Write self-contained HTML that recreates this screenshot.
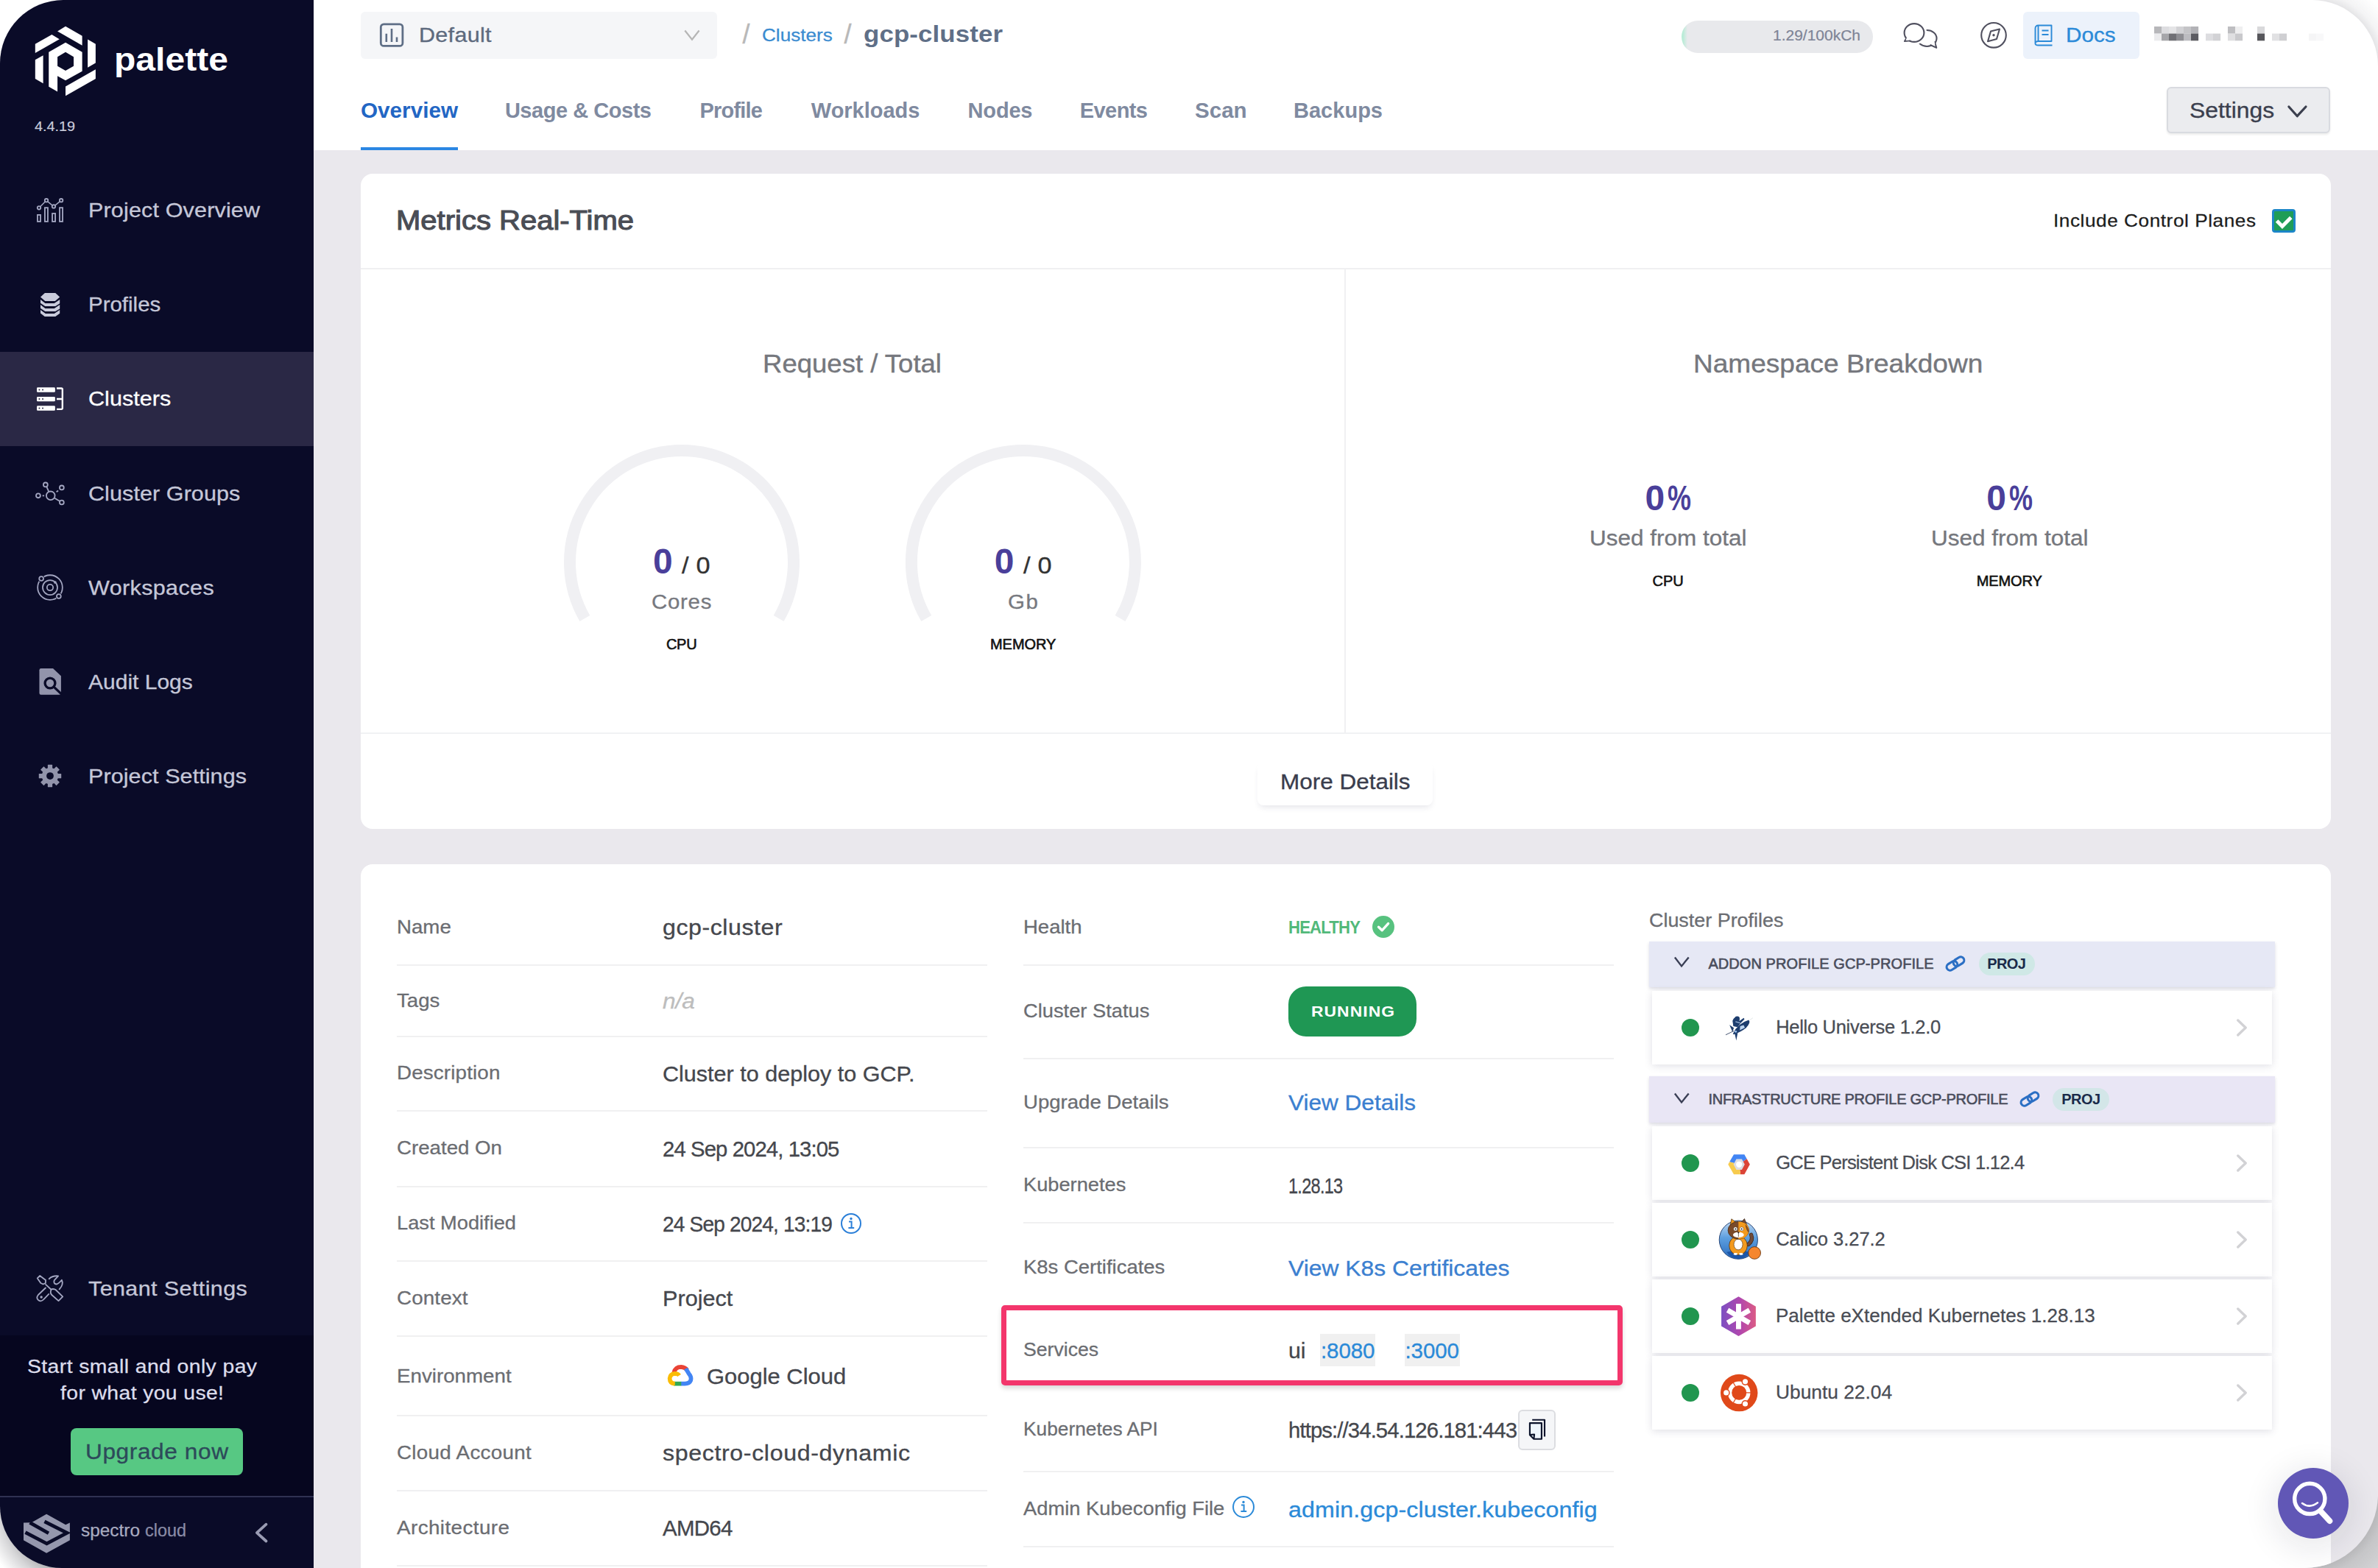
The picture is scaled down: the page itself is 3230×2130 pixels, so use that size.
<!DOCTYPE html><html lang="en"><head><meta charset="utf-8"><title>gcp-cluster - Palette</title><style>

html,body{margin:0;padding:0;}
body{width:3230px;height:2130px;overflow:hidden;background:#fff;font-family:"Liberation Sans", sans-serif;position:relative;}
#app{position:absolute;left:0;top:0;width:3230px;height:2130px;overflow:hidden;background:#eae8ed;border-radius:86px 90px 100px 84px;}
.b{position:absolute;box-sizing:border-box;display:block;}
.t{position:absolute;white-space:pre;line-height:1;font-family:"Liberation Sans", sans-serif;margin:0;padding:0;}

</style></head><body><div class="b" style="left:3110px;top:0;width:120px;height:120px;background:radial-gradient(circle at 30px 90px,#e2e2e4 88px,#f4f4f5 100px,#fff 122px);"></div><div class="b" style="left:3100px;top:2000px;width:130px;height:130px;background:radial-gradient(circle at 30px 30px,#b4b4b6 96px,#c6c6c8 112px,#d8d8da 150px);"></div><div class="b" style="left:0;top:2010px;width:130px;height:120px;background:radial-gradient(circle at 100px 40px,#aeaeb0 82px,#d6d6d8 100px,#fff 124px);"></div><div id="app">
<div class="b" style="left:0px;top:0px;width:426px;height:2130px;background:#0a0b28;"></div>
<div class="b" style="left:0px;top:478px;width:426px;height:128px;background:#2a2845;"></div>
<div class="b" style="left:0px;top:1814px;width:426px;height:218px;background:#06061f;"></div>
<div class="b" style="left:0px;top:2031.5px;width:426px;height:2.2px;background:#2f3152;"></div>
<span class="t" style="top:58.51px;font-size:44px;color:#fff;font-weight:700;letter-spacing:0.062px;transform:scaleX(1.0900);transform-origin:left center;left:155.00px;">palette</span>
<span class="t" style="top:161.72px;font-size:19px;color:#c9cbdb;-webkit-text-stroke:0.21px;transform:scaleX(1.0411);transform-origin:left center;left:47.00px;">4.4.19</span>
<span class="t" style="top:271.92px;font-size:28px;color:#c5c7d8;-webkit-text-stroke:0.31px;letter-spacing:0.142px;transform:scaleX(1.0900);transform-origin:left center;left:120.00px;">Project Overview</span>
<span class="t" style="top:400.32px;font-size:28px;color:#c5c7d8;-webkit-text-stroke:0.31px;transform:scaleX(1.0527);transform-origin:left center;left:120.00px;">Profiles</span>
<span class="t" style="top:528.32px;font-size:28px;color:#fff;-webkit-text-stroke:0.31px;letter-spacing:0.033px;transform:scaleX(1.0900);transform-origin:left center;left:120.00px;">Clusters</span>
<span class="t" style="top:657.32px;font-size:28px;color:#c5c7d8;-webkit-text-stroke:0.31px;letter-spacing:0.075px;transform:scaleX(1.0900);transform-origin:left center;left:120.00px;">Cluster Groups</span>
<span class="t" style="top:785.32px;font-size:28px;color:#c5c7d8;-webkit-text-stroke:0.31px;letter-spacing:0.340px;transform:scaleX(1.0900);transform-origin:left center;left:120.00px;">Workspaces</span>
<span class="t" style="top:912.82px;font-size:28px;color:#c5c7d8;-webkit-text-stroke:0.31px;transform:scaleX(1.0716);transform-origin:left center;left:120.00px;">Audit Logs</span>
<span class="t" style="top:1041.32px;font-size:28px;color:#c5c7d8;-webkit-text-stroke:0.31px;letter-spacing:0.076px;transform:scaleX(1.0900);transform-origin:left center;left:120.00px;">Project Settings</span>
<span class="t" style="top:1736.72px;font-size:28px;color:#c5c7d8;-webkit-text-stroke:0.31px;letter-spacing:0.354px;transform:scaleX(1.0900);transform-origin:left center;left:120.00px;">Tenant Settings</span>
<span class="t" style="top:1843.00px;font-size:26px;color:#dcddec;-webkit-text-stroke:0.29px;letter-spacing:0.381px;transform:scaleX(1.0900);transform-origin:left center;left:37.40px;">Start small and only pay</span>
<span class="t" style="top:1879.10px;font-size:26px;color:#dcddec;-webkit-text-stroke:0.29px;letter-spacing:0.354px;transform:scaleX(1.0900);transform-origin:left center;left:82.40px;">for what you use!</span>
<div class="b" style="left:96px;top:1940px;width:234px;height:64px;background:#57c883;border-radius:8px;"></div>
<span class="t" style="top:1957.83px;font-size:29px;color:#2d4a5a;-webkit-text-stroke:0.32px;letter-spacing:0.548px;transform:scaleX(1.0900);transform-origin:left center;left:116.00px;">Upgrade now</span>
<span class="t" style="top:2068.06px;font-size:23px;color:#a9abc0;-webkit-text-stroke:0.25px;transform:scaleX(1.0605);transform-origin:left center;left:109.70px;">spectro</span>
<span class="t" style="top:2068.06px;font-size:23px;color:#8a8ca6;-webkit-text-stroke:0.25px;transform:scaleX(1.0185);transform-origin:left center;left:196.60px;">cloud</span>
<div class="b" style="left:426px;top:0px;width:2804px;height:204px;background:#fff;"></div>
<div class="b" style="left:490px;top:16px;width:484px;height:64px;background:#f5f6f8;border-radius:6px;"></div>
<span class="t" style="top:34.32px;font-size:28px;color:#5d6a7e;-webkit-text-stroke:0.31px;letter-spacing:0.275px;transform:scaleX(1.0900);transform-origin:left center;left:568.50px;">Default</span>
<span class="t" style="top:28.91px;font-size:36px;color:#b8b8b8;-webkit-text-stroke:0.40px;left:1008.50px;">/</span>
<span class="t" style="top:35.88px;font-size:24px;color:#3a8bd0;-webkit-text-stroke:0.26px;transform:scaleX(1.0882);transform-origin:left center;left:1035.40px;">Clusters</span>
<span class="t" style="top:28.91px;font-size:36px;color:#b8b8b8;-webkit-text-stroke:0.40px;left:1146.50px;">/</span>
<span class="t" style="top:30.37px;font-size:32px;color:#5f6f87;font-weight:700;letter-spacing:0.091px;transform:scaleX(1.0900);transform-origin:left center;left:1173.00px;">gcp-cluster</span>
<span class="t" style="top:135.83px;font-size:29px;color:#2266c4;font-weight:700;transform:scaleX(1.0234);transform-origin:left center;left:490.00px;">Overview</span>
<span class="t" style="top:135.83px;font-size:29px;color:#7f8aa0;font-weight:700;letter-spacing:-0.464px;left:685.90px;">Usage &amp; Costs</span>
<span class="t" style="top:135.83px;font-size:29px;color:#7f8aa0;font-weight:700;letter-spacing:-0.775px;left:950.40px;">Profile</span>
<span class="t" style="top:135.83px;font-size:29px;color:#7f8aa0;font-weight:700;letter-spacing:-0.015px;left:1101.80px;">Workloads</span>
<span class="t" style="top:135.83px;font-size:29px;color:#7f8aa0;font-weight:700;letter-spacing:-0.185px;left:1314.60px;">Nodes</span>
<span class="t" style="top:135.83px;font-size:29px;color:#7f8aa0;font-weight:700;letter-spacing:-0.582px;left:1466.80px;">Events</span>
<span class="t" style="top:135.83px;font-size:29px;color:#7f8aa0;font-weight:700;transform:scaleX(1.0198);transform-origin:left center;left:1622.80px;">Scan</span>
<span class="t" style="top:135.83px;font-size:29px;color:#7f8aa0;font-weight:700;letter-spacing:0.018px;left:1757.00px;">Backups</span>
<div class="b" style="left:490px;top:200px;width:132px;height:4px;background:#2b87e3;"></div>
<div class="b" style="left:2284px;top:28px;width:260px;height:44px;background:linear-gradient(90deg,#b9ecd7 0,#b9ecd7 2px,#e8e9ec 8px);border-radius:22px;"></div>
<span class="t" style="top:39.47px;font-size:19.5px;color:#7e8496;-webkit-text-stroke:0.21px;transform:scaleX(1.0760);transform-origin:left center;left:2408.00px;">1.29/100kCh</span>
<div class="b" style="left:2748px;top:16px;width:158px;height:64px;background:#ecf2fb;border-radius:6px;"></div>
<span class="t" style="top:34.17px;font-size:27.5px;color:#2b8ad8;-webkit-text-stroke:0.30px;transform:scaleX(1.0805);transform-origin:left center;left:2806.00px;">Docs</span>
<div class="b" style="left:2943px;top:118px;width:222px;height:63px;background:#ebecef;border-radius:6px;border:2px solid #d9dbe0;box-shadow:0 2px 3px rgba(0,0,0,.08);"></div>
<span class="t" style="top:135.34px;font-size:30px;color:#3b3f4e;-webkit-text-stroke:0.33px;transform:scaleX(1.0627);transform-origin:left center;left:2973.50px;">Settings</span>
<div class="b" style="left:490px;top:236px;width:2676px;height:890px;background:#fff;border-radius:16px;"></div>
<div class="b" style="left:490px;top:364px;width:2676px;height:2px;background:#f0f0f2;"></div>
<div class="b" style="left:490px;top:995px;width:2676px;height:2px;background:#f1f2f4;"></div>
<div class="b" style="left:1826px;top:366px;width:2px;height:630px;background:#f0f0f2;"></div>
<span class="t" style="top:280.93px;font-size:37px;color:#4a4d55;-webkit-text-stroke:1.11px;transform:scaleX(1.0811);transform-origin:left center;left:537.90px;">Metrics Real-Time</span>
<span class="t" style="top:288.28px;font-size:24px;color:#1c1c1c;-webkit-text-stroke:0.26px;letter-spacing:0.515px;transform:scaleX(1.0900);transform-origin:left center;left:2789.00px;">Include Control Planes</span>
<div class="b" style="left:3086px;top:284px;width:32px;height:32px;background:#1f9d57;border-radius:4px;border:3px solid #1c86c8;"></div>
<span class="t" style="top:475.50px;font-size:35px;color:#75777d;-webkit-text-stroke:0.38px;transform:scaleX(1.0436);transform-origin:left center;left:1036.00px;">Request / Total</span>
<span class="t" style="top:476.30px;font-size:35px;color:#75777d;-webkit-text-stroke:0.38px;transform:scaleX(1.0584);transform-origin:left center;left:2299.95px;">Namespace Breakdown</span>
<span class="t" style="top:738.55px;font-size:48px;color:#4a3f9a;font-weight:700;left:900.30px;transform:translateX(-50%);">0</span>
<span class="t" style="top:753.41px;font-size:31.5px;color:#333;-webkit-text-stroke:0.35px;letter-spacing:0.145px;transform:scaleX(1.0900);transform-origin:left center;left:925.95px;">/ 0</span>
<span class="t" style="top:804.81px;font-size:27px;color:#77797f;-webkit-text-stroke:0.30px;letter-spacing:0.662px;transform:scaleX(1.0900);transform-origin:left center;left:885.10px;">Cores</span>
<span class="t" style="top:865.13px;font-size:20px;color:#111;-webkit-text-stroke:0.60px;letter-spacing:-0.217px;left:904.90px;">CPU</span>
<span class="t" style="top:738.55px;font-size:48px;color:#4a3f9a;font-weight:700;left:1364.20px;transform:translateX(-50%);">0</span>
<span class="t" style="top:753.41px;font-size:31.5px;color:#333;-webkit-text-stroke:0.35px;letter-spacing:0.145px;transform:scaleX(1.0900);transform-origin:left center;left:1389.85px;">/ 0</span>
<span class="t" style="top:804.81px;font-size:27px;color:#77797f;-webkit-text-stroke:0.30px;letter-spacing:1.583px;transform:scaleX(1.0900);transform-origin:left center;left:1369.20px;">Gb</span>
<span class="t" style="top:865.13px;font-size:20px;color:#111;-webkit-text-stroke:0.60px;letter-spacing:-0.028px;left:1344.95px;">MEMORY</span>
<span class="t" style="top:653.05px;font-size:48px;color:#4a3f9a;font-weight:700;left:2234.60px;">0<span style="display:inline-block;transform:scaleX(.75);transform-origin:left center;margin-left:3.5px">%</span></span>
<span class="t" style="top:717.23px;font-size:29px;color:#75777d;-webkit-text-stroke:0.32px;transform:scaleX(1.0862);transform-origin:left center;left:2158.80px;">Used from total</span>
<span class="t" style="top:778.83px;font-size:20px;color:#111;-webkit-text-stroke:0.60px;letter-spacing:-0.117px;left:2244.60px;">CPU</span>
<span class="t" style="top:653.05px;font-size:48px;color:#4a3f9a;font-weight:700;left:2698.30px;">0<span style="display:inline-block;transform:scaleX(.75);transform-origin:left center;margin-left:3.5px">%</span></span>
<span class="t" style="top:717.23px;font-size:29px;color:#75777d;-webkit-text-stroke:0.32px;transform:scaleX(1.0862);transform-origin:left center;left:2622.50px;">Used from total</span>
<span class="t" style="top:778.83px;font-size:20px;color:#111;-webkit-text-stroke:0.60px;letter-spacing:-0.108px;left:2684.75px;">MEMORY</span>
<div class="b" style="left:1708px;top:1036px;width:238px;height:58px;background:#fff;border-radius:8px;box-shadow:0 5px 8px -3px rgba(40,40,80,.13);"></div>
<span class="t" style="top:1047.83px;font-size:29px;color:#3a3d4d;-webkit-text-stroke:0.32px;transform:scaleX(1.0849);transform-origin:left center;left:1738.70px;">More Details</span>
<div class="b" style="left:490px;top:1174px;width:2676px;height:1100px;background:#fff;border-radius:16px;"></div>
<span class="t" style="top:1247.24px;font-size:25.5px;color:#6b6d72;-webkit-text-stroke:0.28px;transform:scaleX(1.0848);transform-origin:left center;left:539.40px;">Name</span>
<span class="t" style="top:1346.74px;font-size:25.5px;color:#6b6d72;-webkit-text-stroke:0.28px;transform:scaleX(1.0821);transform-origin:left center;left:539.40px;">Tags</span>
<span class="t" style="top:1445.14px;font-size:25.5px;color:#6b6d72;-webkit-text-stroke:0.28px;letter-spacing:0.124px;transform:scaleX(1.0900);transform-origin:left center;left:539.40px;">Description</span>
<span class="t" style="top:1547.34px;font-size:25.5px;color:#6b6d72;-webkit-text-stroke:0.28px;transform:scaleX(1.0847);transform-origin:left center;left:539.40px;">Created On</span>
<span class="t" style="top:1648.94px;font-size:25.5px;color:#6b6d72;-webkit-text-stroke:0.28px;transform:scaleX(1.0681);transform-origin:left center;left:539.40px;">Last Modified</span>
<span class="t" style="top:1751.14px;font-size:25.5px;color:#6b6d72;-webkit-text-stroke:0.28px;letter-spacing:0.107px;transform:scaleX(1.0900);transform-origin:left center;left:539.40px;">Context</span>
<span class="t" style="top:1857.14px;font-size:25.5px;color:#6b6d72;-webkit-text-stroke:0.28px;transform:scaleX(1.0869);transform-origin:left center;left:539.40px;">Environment</span>
<span class="t" style="top:1961.24px;font-size:25.5px;color:#6b6d72;-webkit-text-stroke:0.28px;letter-spacing:0.271px;transform:scaleX(1.0900);transform-origin:left center;left:539.40px;">Cloud Account</span>
<span class="t" style="top:2063.04px;font-size:25.5px;color:#6b6d72;-webkit-text-stroke:0.28px;letter-spacing:0.383px;transform:scaleX(1.0900);transform-origin:left center;left:539.40px;">Architecture</span>
<div class="b" style="left:539px;top:1310px;width:801.5px;height:2px;background:#f0f0f1;"></div>
<div class="b" style="left:539px;top:1406.5px;width:801.5px;height:2px;background:#f0f0f1;"></div>
<div class="b" style="left:539px;top:1508px;width:801.5px;height:2px;background:#f0f0f1;"></div>
<div class="b" style="left:539px;top:1610.5px;width:801.5px;height:2px;background:#f0f0f1;"></div>
<div class="b" style="left:539px;top:1712px;width:801.5px;height:2px;background:#f0f0f1;"></div>
<div class="b" style="left:539px;top:1814px;width:801.5px;height:2px;background:#f0f0f1;"></div>
<div class="b" style="left:539px;top:1922px;width:801.5px;height:2px;background:#f0f0f1;"></div>
<div class="b" style="left:539px;top:2024px;width:801.5px;height:2px;background:#f0f0f1;"></div>
<div class="b" style="left:539px;top:2126px;width:801.5px;height:2px;background:#f0f0f1;"></div>
<span class="t" style="top:1245.29px;font-size:29.5px;color:#45474d;-webkit-text-stroke:0.32px;letter-spacing:0.498px;transform:scaleX(1.0900);transform-origin:left center;left:900.00px;">gcp-cluster</span>
<span class="t" style="top:1344.79px;font-size:29.5px;color:#bdbdbd;-webkit-text-stroke:0.32px;font-style:italic;transform:scaleX(1.0703);transform-origin:left center;left:900.00px;">n/a</span>
<span class="t" style="top:1443.99px;font-size:29.5px;color:#45474d;-webkit-text-stroke:0.32px;transform:scaleX(1.0357);transform-origin:left center;left:900.00px;">Cluster to deploy to GCP.</span>
<span class="t" style="top:1546.19px;font-size:29.5px;color:#45474d;-webkit-text-stroke:0.32px;letter-spacing:-0.900px;transform:scaleX(0.9920);transform-origin:left center;left:900.00px;">24 Sep 2024, 13:05</span>
<span class="t" style="top:1647.79px;font-size:29.5px;color:#45474d;-webkit-text-stroke:0.32px;letter-spacing:-0.900px;transform:scaleX(0.9532);transform-origin:left center;left:900.00px;">24 Sep 2024, 13:19</span>
<span class="t" style="top:1749.19px;font-size:29.5px;color:#45474d;-webkit-text-stroke:0.32px;transform:scaleX(1.0389);transform-origin:left center;left:900.00px;">Project</span>
<span class="t" style="top:1855.19px;font-size:29.5px;color:#45474d;-webkit-text-stroke:0.32px;transform:scaleX(1.0487);transform-origin:left center;left:959.90px;">Google Cloud</span>
<span class="t" style="top:1959.29px;font-size:29.5px;color:#45474d;-webkit-text-stroke:0.32px;letter-spacing:0.575px;transform:scaleX(1.0900);transform-origin:left center;left:900.00px;">spectro-cloud-dynamic</span>
<span class="t" style="top:2061.39px;font-size:29.5px;color:#45474d;-webkit-text-stroke:0.32px;letter-spacing:-0.744px;left:900.00px;">AMD64</span>
<span class="t" style="top:1247.24px;font-size:25.5px;color:#6b6d72;-webkit-text-stroke:0.28px;transform:scaleX(1.0784);transform-origin:left center;left:1390.00px;">Health</span>
<span class="t" style="top:1361.14px;font-size:25.5px;color:#6b6d72;-webkit-text-stroke:0.28px;transform:scaleX(1.0702);transform-origin:left center;left:1390.00px;">Cluster Status</span>
<span class="t" style="top:1484.94px;font-size:25.5px;color:#6b6d72;-webkit-text-stroke:0.28px;transform:scaleX(1.0806);transform-origin:left center;left:1390.00px;">Upgrade Details</span>
<span class="t" style="top:1596.94px;font-size:25.5px;color:#6b6d72;-webkit-text-stroke:0.28px;transform:scaleX(1.0679);transform-origin:left center;left:1390.00px;">Kubernetes</span>
<span class="t" style="top:1709.14px;font-size:25.5px;color:#6b6d72;-webkit-text-stroke:0.28px;transform:scaleX(1.0769);transform-origin:left center;left:1390.00px;">K8s Certificates</span>
<span class="t" style="top:1821.14px;font-size:25.5px;color:#6b6d72;-webkit-text-stroke:0.28px;transform:scaleX(1.0452);transform-origin:left center;left:1390.00px;">Services</span>
<span class="t" style="top:1929.04px;font-size:25.5px;color:#6b6d72;-webkit-text-stroke:0.28px;transform:scaleX(1.0315);transform-origin:left center;left:1390.00px;">Kubernetes API</span>
<span class="t" style="top:2036.84px;font-size:25.5px;color:#6b6d72;-webkit-text-stroke:0.28px;transform:scaleX(1.0712);transform-origin:left center;left:1390.00px;">Admin Kubeconfig File</span>
<div class="b" style="left:1390px;top:1310px;width:802px;height:2px;background:#f0f0f1;"></div>
<div class="b" style="left:1390px;top:1436.5px;width:802px;height:2px;background:#f0f0f1;"></div>
<div class="b" style="left:1390px;top:1558px;width:802px;height:2px;background:#f0f0f1;"></div>
<div class="b" style="left:1390px;top:1660px;width:802px;height:2px;background:#f0f0f1;"></div>
<div class="b" style="left:1390px;top:1998px;width:802px;height:2px;background:#f0f0f1;"></div>
<div class="b" style="left:1390px;top:2100px;width:802px;height:2px;background:#f0f0f1;"></div>
<span class="t" style="top:1248.28px;font-size:24px;color:#52b97a;font-weight:700;letter-spacing:-0.900px;transform:scaleX(0.9231);transform-origin:left center;left:1750.00px;">HEALTHY</span>
<div class="b" style="left:1750px;top:1340px;width:174px;height:68px;background:#1f9754;border-radius:24px;"></div>
<span class="t" style="top:1362.64px;font-size:21px;color:#fff;font-weight:700;letter-spacing:0.945px;transform:scaleX(1.0900);transform-origin:left center;left:1780.50px;">RUNNING</span>
<span class="t" style="top:1483.39px;font-size:29.5px;color:#3b7fd0;-webkit-text-stroke:0.32px;transform:scaleX(1.0693);transform-origin:left center;left:1750.00px;">View Details</span>
<span class="t" style="top:1595.59px;font-size:29.5px;color:#45474d;-webkit-text-stroke:0.32px;letter-spacing:-0.900px;transform:scaleX(0.7975);transform-origin:left center;left:1750.00px;">1.28.13</span>
<span class="t" style="top:1707.59px;font-size:29.5px;color:#3b7fd0;-webkit-text-stroke:0.32px;transform:scaleX(1.0802);transform-origin:left center;left:1750.00px;">View K8s Certificates</span>
<div class="b" style="left:1360px;top:1773px;width:844px;height:109px;border-radius:5px;border:7px solid #f3366c;box-shadow:0 4px 6px rgba(0,0,0,.15);"></div>
<span class="t" style="top:1819.59px;font-size:29.5px;color:#45474d;-webkit-text-stroke:0.32px;transform:scaleX(1.0231);transform-origin:left center;left:1750.00px;">ui</span>
<div class="b" style="left:1793px;top:1812px;width:75px;height:44px;background:#f0f0f0;"></div>
<div class="b" style="left:1907.5px;top:1812px;width:75px;height:44px;background:#f0f0f0;"></div>
<span class="t" style="top:1819.59px;font-size:29.5px;color:#2b8ad8;-webkit-text-stroke:0.32px;letter-spacing:-0.107px;left:1794.00px;">:8080</span>
<span class="t" style="top:1819.59px;font-size:29.5px;color:#2b8ad8;-webkit-text-stroke:0.32px;letter-spacing:-0.107px;left:1908.50px;">:3000</span>
<span class="t" style="top:1927.59px;font-size:29.5px;color:#45474d;-webkit-text-stroke:0.32px;letter-spacing:-0.900px;transform:scaleX(0.9935);transform-origin:left center;left:1750.00px;">https://34.54.126.181:443</span>
<div class="b" style="left:2062px;top:1915px;width:51px;height:55px;background:#f5f6f8;border-radius:6px;border:2px solid #dcdde1;"></div>
<span class="t" style="top:2035.59px;font-size:29.5px;color:#2b8ad8;-webkit-text-stroke:0.32px;letter-spacing:0.110px;transform:scaleX(1.0900);transform-origin:left center;left:1750.00px;">admin.gcp-cluster.kubeconfig</span>
<span class="t" style="top:1236.70px;font-size:26px;color:#6b6d72;-webkit-text-stroke:0.29px;transform:scaleX(1.0347);transform-origin:left center;left:2240.30px;">Cluster Profiles</span>
<div class="b" style="left:2240px;top:1278.5px;width:850px;height:62px;background:#e6e8f5;box-shadow:0 2px 4px rgba(60,60,100,.18);"></div>
<span class="t" style="top:1299.03px;font-size:20px;color:#4a4d5c;-webkit-text-stroke:0.60px;letter-spacing:0.071px;left:2320.40px;">ADDON PROFILE GCP-PROFILE</span>
<div class="b" style="left:2688px;top:1294px;width:76px;height:31px;background:#cfe8e6;border-radius:16px;"></div>
<span class="t" style="top:1299.23px;font-size:20px;color:#1a2a4a;font-weight:700;letter-spacing:-0.556px;left:2699.20px;">PROJ</span>
<div class="b" style="left:2240px;top:1462px;width:850px;height:63px;background:#e9e6f5;box-shadow:0 2px 4px rgba(60,60,100,.18);"></div>
<span class="t" style="top:1483.03px;font-size:20px;color:#4a4d5c;-webkit-text-stroke:0.60px;letter-spacing:-0.255px;left:2320.40px;">INFRASTRUCTURE PROFILE GCP-PROFILE</span>
<div class="b" style="left:2788.2px;top:1478px;width:77px;height:31px;background:#d3e6e8;border-radius:16px;"></div>
<span class="t" style="top:1483.23px;font-size:20px;color:#1a2a4a;font-weight:700;letter-spacing:-0.556px;left:2800.30px;">PROJ</span>
<div class="b" style="left:2244px;top:1346px;width:842px;height:100px;background:#fff;box-shadow:0 2px 10px rgba(60,60,100,.16);"></div>
<div class="b" style="left:2283.7px;top:1383.8px;width:24px;height:24px;background:#21964f;border-radius:12px;"></div>
<span class="t" style="top:1383.34px;font-size:25.5px;color:#4a4d55;-webkit-text-stroke:0.28px;letter-spacing:-0.296px;left:2412.20px;">Hello Universe 1.2.0</span>
<div class="b" style="left:2244px;top:1530px;width:842px;height:100px;background:#fff;box-shadow:0 2px 10px rgba(60,60,100,.16);"></div>
<div class="b" style="left:2283.7px;top:1567.9px;width:24px;height:24px;background:#21964f;border-radius:12px;"></div>
<span class="t" style="top:1567.44px;font-size:25.5px;color:#4a4d55;-webkit-text-stroke:0.28px;letter-spacing:-0.761px;left:2412.20px;">GCE Persistent Disk CSI 1.12.4</span>
<div class="b" style="left:2244px;top:1634px;width:842px;height:100px;background:#fff;box-shadow:0 2px 10px rgba(60,60,100,.16);"></div>
<div class="b" style="left:2283.7px;top:1671.7px;width:24px;height:24px;background:#21964f;border-radius:12px;"></div>
<span class="t" style="top:1671.24px;font-size:25.5px;color:#4a4d55;-webkit-text-stroke:0.28px;letter-spacing:-0.020px;left:2412.20px;">Calico 3.27.2</span>
<div class="b" style="left:2244px;top:1738px;width:842px;height:100px;background:#fff;box-shadow:0 2px 10px rgba(60,60,100,.16);"></div>
<div class="b" style="left:2283.7px;top:1775.7px;width:24px;height:24px;background:#21964f;border-radius:12px;"></div>
<span class="t" style="top:1775.24px;font-size:25.5px;color:#4a4d55;-webkit-text-stroke:0.28px;transform:scaleX(1.0194);transform-origin:left center;left:2412.20px;">Palette eXtended Kubernetes 1.28.13</span>
<div class="b" style="left:2244px;top:1842px;width:842px;height:100px;background:#fff;box-shadow:0 2px 10px rgba(60,60,100,.16);"></div>
<div class="b" style="left:2283.7px;top:1879.6px;width:24px;height:24px;background:#21964f;border-radius:12px;"></div>
<span class="t" style="top:1879.14px;font-size:25.5px;color:#4a4d55;-webkit-text-stroke:0.28px;transform:scaleX(1.0325);transform-origin:left center;left:2412.20px;">Ubuntu 22.04</span>
<div class="b" style="left:3094px;top:1993.5px;width:96px;height:96px;background:#6157b6;border-radius:48px;box-shadow:0 8px 44px 8px rgba(20,20,40,.09);"></div>
<svg class="b" style="left:30px;top:20px;" width="140" height="130" viewBox="0 0 1689 1568"><g fill="#fff">
<polygon points="712,190 985,348 985,505 580,270"/>
<polygon points="215,480 487,325 612,400 215,628"/>
<polygon points="345,665 345,1125 215,1050 215,738"/>
<polygon points="1075,405 1205,480 1205,790 1075,865"/>
<polygon points="1205,895 1205,1050 712,1330 712,1175"/>
<path fill-rule="evenodd" d="M712,455 L985,612 L985,925 L712,1078 L580,1003 L580,1260 L437,1178 L437,612 Z M712,612 L845,690 L845,840 L712,918 L580,840 L580,690 Z"/>
</g></svg>
<svg class="b" style="left:37px;top:255px;" width="60" height="60" viewBox="0 0 1568 1568"><g fill="none" stroke="#a3a6c1" stroke-width="48">
<rect x="365" y="965" width="105" height="235"/><rect x="625" y="710" width="105" height="490"/><rect x="890" y="915" width="105" height="285"/><rect x="1150" y="710" width="105" height="490"/>
<path d="M460,672 L640,492 M722,488 L895,630 M985,628 L1160,488" stroke-width="40"/>
<circle cx="418" cy="715" r="58"/><circle cx="680" cy="450" r="58"/><circle cx="940" cy="665" r="58"/><circle cx="1205" cy="450" r="58"/></g></svg>
<svg class="b" style="left:37px;top:384px;" width="60" height="60" viewBox="0 0 1568 1568"><g fill="#c9cbdb">
<polygon points="625,365 1000,365 1155,510 990,655 635,655 470,510"/>
<polygon points="470,600 640,732 960,732 1155,598 1155,738 1000,838 635,838 470,722"/>
<polygon points="470,785 640,912 960,912 1155,785 1155,925 1000,1020 635,1020 470,905"/>
<polygon points="470,965 650,1095 960,1095 1155,965 1155,1090 1000,1205 620,1205 470,1085"/></g></svg>
<svg class="b" style="left:37px;top:512px;" width="60" height="60" viewBox="0 0 1568 1568"><g fill="#fff"><rect x="340" y="375" width="650" height="170" rx="35"/><rect x="340" y="705" width="650" height="165" rx="35"/><rect x="340" y="1025" width="650" height="170" rx="35"/></g>
<g fill="#2a2845"><circle cx="430" cy="460" r="26"/><circle cx="550" cy="460" r="26"/><circle cx="430" cy="785" r="26"/><circle cx="550" cy="785" r="26"/><circle cx="430" cy="1110" r="26"/><circle cx="550" cy="1110" r="26"/></g>
<path d="M1045,405 L1210,405 Q1250,405 1250,445 L1250,1105 Q1250,1145 1210,1145 L1045,1145 M1045,785 L1250,785" fill="none" stroke="#fff" stroke-width="62"/></svg>
<svg class="b" style="left:37px;top:641px;" width="60" height="60" viewBox="0 0 1568 1568"><g fill="none" stroke="#a3a6c1" stroke-width="48"><circle cx="830" cy="845" r="152"/><circle cx="650" cy="455" r="76"/><circle cx="1225" cy="560" r="76"/><circle cx="390" cy="845" r="76"/><circle cx="1225" cy="1085" r="76"/>
<path d="M690,535 L765,700 M1035,712 L1100,665 M540,845 L605,845 M975,935 L1150,1040"/></g></svg>
<svg class="b" style="left:37px;top:769px;" width="60" height="60" viewBox="0 0 1568 1568"><g fill="none" stroke="#a3a6c1" stroke-width="46"><circle cx="810" cy="760" r="440"/><circle cx="810" cy="760" r="262"/><circle cx="810" cy="760" r="108"/>
<circle cx="500" cy="445" r="120" fill="#0a0b28" stroke="none"/><circle cx="1120" cy="1070" r="120" fill="#0a0b28" stroke="none"/>
<circle cx="500" cy="445" r="76"/><circle cx="1120" cy="1070" r="76"/><circle cx="990" cy="575" r="48" fill="#a3a6c1" stroke="none"/></g></svg>
<svg class="b" style="left:37px;top:896px;" width="60" height="60" viewBox="0 0 1568 1568"><path d="M490,315 L915,315 L1200,580 L1200,1190 Q1200,1250 1140,1250 L490,1250 Q430,1250 430,1190 L430,375 Q430,315 490,315 Z" fill="#9294ab"/>
<circle cx="810" cy="835" r="180" fill="none" stroke="#0a0b28" stroke-width="88"/><path d="M945,970 L1215,1225" stroke="#0a0b28" stroke-width="88"/></svg>
<svg class="b" style="left:37px;top:1025px;" width="60" height="60" viewBox="0 0 1568 1568"><g transform="translate(810,760)" fill="#9294ab"><circle r="292"/><rect x="-82" y="-398" width="164" height="170" rx="14" transform="rotate(0)"/><rect x="-82" y="-398" width="164" height="170" rx="14" transform="rotate(45)"/><rect x="-82" y="-398" width="164" height="170" rx="14" transform="rotate(90)"/><rect x="-82" y="-398" width="164" height="170" rx="14" transform="rotate(135)"/><rect x="-82" y="-398" width="164" height="170" rx="14" transform="rotate(180)"/><rect x="-82" y="-398" width="164" height="170" rx="14" transform="rotate(225)"/><rect x="-82" y="-398" width="164" height="170" rx="14" transform="rotate(270)"/><rect x="-82" y="-398" width="164" height="170" rx="14" transform="rotate(315)"/><circle r="128" fill="#0a0b28"/></g></svg>
<svg class="b" style="left:37px;top:1720px;" width="60" height="60" viewBox="0 0 1568 1568"><g fill="none" stroke="#a3a6c1" stroke-width="48" stroke-linejoin="round" stroke-linecap="round">
<path d="M450,340 L655,495 L650,600 L565,640 L480,600 L360,430 Z"/><path d="M655,650 L850,830"/>
<path d="M850,830 Q900,790 1000,830 L1260,1080 L1110,1230 L870,1020 Q800,950 850,830 Z"/>
<path d="M775,450 Q900,330 1100,350 L960,500 Q920,620 1030,640 Q1100,640 1225,490 Q1300,650 1140,820"/>
<path d="M650,770 L390,1020 Q300,1130 400,1210 Q500,1280 590,1170 L765,990"/><circle cx="500" cy="1095" r="22" fill="#a3a6c1"/></g></svg>
<svg class="b" style="left:0px;top:2010px;" width="160" height="120" viewBox="0 0 2091 1568"><polygon points="418,765 560,762 825,610 1165,800 1240,765 1240,1075 825,1305 418,1075" fill="#9597ad"/>
<g fill="none" stroke="#0a0b28" stroke-width="62"><path d="M530,762 L862,950"/><path d="M790,742 L1190,945 L830,1135 L450,935"/></g></svg>
<svg class="b" style="left:340px;top:2060px;" width="40" height="44" viewBox="0 0 40 44"><path d="M21.5,10.7 L8.9,22.1 L21.5,33.5" fill="none" stroke="#9a9cb3" stroke-width="3.8" stroke-linecap="round" stroke-linejoin="round"/></svg>
<svg class="b" style="left:512px;top:28px;" width="40" height="40" viewBox="0 0 40 40"><rect x="5.3" y="4.8" width="29.6" height="29.6" rx="4" fill="none" stroke="#5f6f86" stroke-width="2.8"/>
<path d="M12.8,17.7 V29 M20,11 V29 M27,22.4 V29" stroke="#5f6f86" stroke-width="2.6" fill="none"/></svg>
<svg class="b" style="left:920px;top:30px;" width="40" height="34" viewBox="0 0 40 34"><path d="M10.3,11.5 L20,23.7 L29.6,11.5" fill="none" stroke="#b5b5b5" stroke-width="2.2"/></svg>
<svg class="b" style="left:2575px;top:20px;" width="70" height="56" viewBox="0 0 70 56"><g fill="#fff" stroke="#50505f" stroke-width="2.1" stroke-linejoin="round" stroke-linecap="round">
<ellipse cx="42.4" cy="32" rx="13.1" ry="11"/><path d="M47.5,41.2 L55.2,44.9 L53,37.2" /><path d="M46.5,39.5 L52.6,36.2 L53.4,42.6 Z" stroke="none"/>
<ellipse cx="25" cy="24.5" rx="15.6" ry="14.6" stroke="#fff" stroke-width="3"/>
<ellipse cx="25" cy="24.5" rx="13.4" ry="12.4"/><path d="M14.6,31.8 L12,36 L19.2,35.2"/><path d="M15.2,30 L13.6,35 L20.5,34.2 Z" stroke="none"/></g></svg>
<svg class="b" style="left:2685px;top:24px;" width="48" height="48" viewBox="0 0 48 48"><g fill="none" stroke="#50505f" stroke-width="2.1" stroke-linejoin="round"><circle cx="23" cy="23.8" r="16.8"/>
<path d="M31,15.5 L27,29 L15,32.2 L19,18.5 Z"/></g><circle cx="23" cy="23.8" r="1.7" fill="#50505f"/></svg>
<svg class="b" style="left:2760px;top:30px;" width="32" height="36" viewBox="0 0 32 36"><g fill="none" stroke="#2b8ad8" stroke-width="1.9" stroke-linejoin="round">
<path d="M8.5,4.5 H26.5 V26 H8.5 C6,26 4.5,27.5 4.5,29 C4.5,30.8 6,31.5 8.5,31.5 H27.5 M4.5,29 V8.5 C4.5,6 6,4.5 8.5,4.5 V26"/>
<path d="M13.5,11.5 H22.5 M13.5,17 H22.5"/></g></svg>
<svg class="b" style="left:3100px;top:135px;" width="40" height="32" viewBox="0 0 40 32"><path d="M8.9,10 L20.3,22.7 L32,10" fill="none" stroke="#3b3f4e" stroke-width="3.2" stroke-linecap="round" stroke-linejoin="round"/></svg>
<svg class="b" style="left:2926px;top:35.8px;" width="240" height="20" viewBox="0 0 240 20"><rect x="0.0" y="0.0" width="10.1" height="9.7" fill="#b7b7ba"/><rect x="10.0" y="0.0" width="10.1" height="9.7" fill="#dddde0"/><rect x="20.0" y="0.0" width="10.1" height="9.7" fill="#e4e4e6"/><rect x="30.0" y="0.0" width="10.1" height="9.7" fill="#d2d2d5"/><rect x="40.0" y="0.0" width="10.1" height="9.7" fill="#c4c4c7"/><rect x="50.0" y="0.0" width="10.1" height="9.7" fill="#b2b2b6"/><rect x="0.0" y="9.6" width="10.1" height="9.7" fill="#ebebed"/><rect x="10.0" y="9.6" width="10.1" height="9.7" fill="#a6a6aa"/><rect x="20.0" y="9.6" width="10.1" height="9.7" fill="#707075"/><rect x="30.0" y="9.6" width="10.1" height="9.7" fill="#8e8e93"/><rect x="40.0" y="9.6" width="10.1" height="9.7" fill="#bcbcc0"/><rect x="50.0" y="9.6" width="10.1" height="9.7" fill="#5c5c62"/><rect x="70.0" y="9.6" width="10.1" height="9.7" fill="#dddde0"/><rect x="80.0" y="9.6" width="10.1" height="9.7" fill="#d2d2d5"/><rect x="100.0" y="0.0" width="10.1" height="9.7" fill="#bebec1"/><rect x="110.0" y="0.0" width="10.1" height="9.7" fill="#efeff0"/><rect x="100.0" y="9.6" width="10.1" height="9.7" fill="#dfdfe1"/><rect x="110.0" y="9.6" width="10.1" height="9.7" fill="#c9c9cc"/><rect x="140.0" y="0.0" width="10.1" height="9.7" fill="#d9d9db"/><rect x="140.0" y="9.6" width="10.1" height="9.7" fill="#56565b"/><rect x="160.0" y="9.6" width="10.1" height="9.7" fill="#e1e1e3"/><rect x="170.0" y="9.6" width="10.1" height="9.7" fill="#cfcfd2"/><rect x="210.0" y="9.6" width="10.1" height="9.7" fill="#f5f5f6"/><rect x="220.0" y="9.6" width="10.1" height="9.7" fill="#f8f8f9"/></svg>
<svg class="b" style="left:3086px;top:284px;" width="32" height="32" viewBox="0 0 32 32"><path d="M6.6,16 L14,23.4 L25.8,11.6" fill="none" stroke="#fff" stroke-width="5" stroke-linecap="butt" stroke-linejoin="miter"/></svg>
<svg class="b" style="left:740px;top:590px;" width="880" height="270" viewBox="0 0 880 270"><path d="M54.36,250.00 A152,152 0 1 1 317.64,250.00" fill="none" stroke="#f0f0f3" stroke-width="16"/><path d="M518.26,250.00 A152,152 0 1 1 781.54,250.00" fill="none" stroke="#f0f0f3" stroke-width="16"/></svg>
<svg class="b" style="left:1862px;top:1242px;" width="34" height="34" viewBox="0 0 34 34"><circle cx="17" cy="17" r="15" fill="#57c27f"/><path d="M10.5,17.2 L15.2,21.8 L23.6,12.6" fill="none" stroke="#fff" stroke-width="3.4" stroke-linecap="round" stroke-linejoin="round"/></svg>
<svg class="b" style="left:1140px;top:1646px;" width="32" height="32" viewBox="0 0 32 32"><circle cx="16" cy="16" r="13" fill="none" stroke="#2b7fd8" stroke-width="2"/><circle cx="16" cy="9.5" r="1.7" fill="#2b7fd8"/><path d="M13,13.5 H16.6 V22 M12.4,22 H20.2" fill="none" stroke="#2b7fd8" stroke-width="2"/></svg>
<svg class="b" style="left:1671.6px;top:2030px;" width="34" height="34" viewBox="0 0 34 34"><circle cx="17" cy="17" r="14" fill="none" stroke="#2b8ad8" stroke-width="2"/><circle cx="17" cy="10.5" r="1.7" fill="#2b8ad8"/><path d="M14,14.5 H17.6 V23 M13.4,23 H21.2" fill="none" stroke="#2b8ad8" stroke-width="2"/></svg>
<svg class="b" style="left:890px;top:1835px;" width="100" height="70" viewBox="0 0 2240 1568"><g fill="none" stroke-width="128" stroke-linecap="butt">
<path d="M570,660 Q610,490 790,490 Q900,495 975,585" stroke="#ea4335"/>
<path d="M930,540 L1020,690 Q1110,790 1080,900 Q1040,1000 900,1000 L780,1000" stroke="#4285f4" stroke-linejoin="round"/>
<path d="M790,1000 L560,1000" stroke="#34a853"/>
<path d="M600,1000 Q440,990 440,840 Q450,700 600,690 Q690,690 730,750" stroke="#fbbc05"/></g></svg>
<svg class="b" style="left:2040px;top:1900px;" width="100" height="85" viewBox="0 0 1845 1568"><g fill="none" stroke="#0b132b" stroke-width="40" stroke-linejoin="round"><path d="M760,530 L1070,530 L1070,950"/>
<path d="M700,610 L995,610 L995,1010 L800,1010 L700,910 Z" fill="#eef5fc"/><path d="M700,905 L812,895 L800,1010"/></g></svg>
<svg class="b" style="left:2264px;top:1292px;" width="40" height="28" viewBox="0 0 40 28"><path d="M10.9,8.6 L20,20.4 L29.7,8.6" fill="none" stroke="#3a3f55" stroke-width="2.4"/></svg>
<svg class="b" style="left:2264px;top:1476.5px;" width="40" height="28" viewBox="0 0 40 28"><path d="M10.9,8.6 L20,20.4 L29.7,8.6" fill="none" stroke="#3a3f55" stroke-width="2.4"/></svg>
<svg class="b" style="left:2641px;top:1295.7px;" width="30" height="26" viewBox="0 0 30 26"><g fill="none" stroke="#2b6fc4" stroke-width="3.1" transform="translate(15,13) rotate(-32)"><rect x="-13.2" y="-4.6" width="15.6" height="9.2" rx="4.6"/><rect x="-2.4" y="-4.6" width="15.6" height="9.2" rx="4.6"/></g></svg>
<svg class="b" style="left:2741.5px;top:1479.8px;" width="30" height="26" viewBox="0 0 30 26"><g fill="none" stroke="#2b6fc4" stroke-width="3.1" transform="translate(15,13) rotate(-32)"><rect x="-13.2" y="-4.6" width="15.6" height="9.2" rx="4.6"/><rect x="-2.4" y="-4.6" width="15.6" height="9.2" rx="4.6"/></g></svg>
<svg class="b" style="left:3030px;top:1379.8px;" width="30" height="32" viewBox="0 0 30 32"><path d="M9.8,6 L20.2,16 L9.8,26" fill="none" stroke="#d2d2d5" stroke-width="3.4" stroke-linecap="round" stroke-linejoin="round"/></svg>
<svg class="b" style="left:3030px;top:1563.9px;" width="30" height="32" viewBox="0 0 30 32"><path d="M9.8,6 L20.2,16 L9.8,26" fill="none" stroke="#d2d2d5" stroke-width="3.4" stroke-linecap="round" stroke-linejoin="round"/></svg>
<svg class="b" style="left:3030px;top:1667.7px;" width="30" height="32" viewBox="0 0 30 32"><path d="M9.8,6 L20.2,16 L9.8,26" fill="none" stroke="#d2d2d5" stroke-width="3.4" stroke-linecap="round" stroke-linejoin="round"/></svg>
<svg class="b" style="left:3030px;top:1771.7px;" width="30" height="32" viewBox="0 0 30 32"><path d="M9.8,6 L20.2,16 L9.8,26" fill="none" stroke="#d2d2d5" stroke-width="3.4" stroke-linecap="round" stroke-linejoin="round"/></svg>
<svg class="b" style="left:3030px;top:1875.6px;" width="30" height="32" viewBox="0 0 30 32"><path d="M9.8,6 L20.2,16 L9.8,26" fill="none" stroke="#d2d2d5" stroke-width="3.4" stroke-linecap="round" stroke-linejoin="round"/></svg>
<svg class="b" style="left:3094px;top:1993.5px;" width="96" height="96" viewBox="0 0 96 96"><g fill="none" stroke="#fff" stroke-linecap="round"><circle cx="43.3" cy="41.9" r="20.6" stroke-width="5.4"/><path d="M58.2,58.9 L70.4,72.2" stroke-width="7.8"/><path d="M33,48 Q43.3,55.6 54,47.3" stroke-width="2.6"/></g></svg>
<svg class="b" style="left:2320px;top:1350px;" width="100" height="90" viewBox="0 0 1742 1568"><g fill="#1d3d6e"><path d="M590,945 Q700,700 965,620 Q1015,690 900,805 Q780,905 605,962 Z"/>
<circle cx="690" cy="590" r="58"/><path d="M580,640 Q600,560 690,545 Q750,565 742,645 L845,572 L862,602 L765,700 L700,790 L598,765 Z"/>
<path d="M508,738 L610,805 L580,905 Z"/><path d="M632,940 L702,925 L668,1105 Z"/></g>
<path d="M418,972 L610,878" stroke="#1d2f52" stroke-width="14"/><path d="M990,620 L1060,570" stroke="#9aa" stroke-width="5"/>
<polygon points="760,765 842,742 872,800 752,862" fill="#bcd4f0"/><circle cx="655" cy="895" r="26" fill="#9cc3ee"/><path d="M650,660 L760,690" stroke="#9cb6d8" stroke-width="22"/></svg>
<svg class="b" style="left:2320px;top:1535px;" width="100" height="90" viewBox="0 0 1742 1568"><polygon points="735,815 508,752 610,580 860,580 918,682" fill="#4285f4"/>
<polygon points="735,815 918,682 990,815 860,1050 768,1050" fill="#db4437"/>
<polygon points="735,815 768,1050 610,1050 475,815 508,752" fill="#f7cb4d"/>
<polygon points="670,690 800,690 868,815 800,942 670,942 602,815" fill="#dcdde3"/><circle cx="735" cy="815" r="72" fill="#fff"/></svg>
<svg class="b" style="left:2320px;top:1640px;" width="100" height="90" viewBox="0 0 1742 1568"><defs><linearGradient id="cg" x1="0" y1="0" x2="0" y2="1"><stop offset="0" stop-color="#c4dbf3"/><stop offset="0.45" stop-color="#5d9fdf"/><stop offset="1" stop-color="#2a6bbd"/></linearGradient></defs><circle cx="720" cy="770" r="455" fill="url(#cg)" stroke="#1d3c6e" stroke-width="16"/>
<path d="M440,1060 Q720,1000 1000,1060 Q900,1215 720,1222 Q540,1215 440,1060 Z" fill="#1c56a8"/>
<path d="M955,880 Q1075,780 1020,650" fill="none" stroke="#3b2414" stroke-width="92" stroke-linecap="round"/><path d="M955,880 Q1075,780 1020,650" fill="none" stroke="#6f4a3a" stroke-width="68" stroke-linecap="round"/>
<ellipse cx="715" cy="905" rx="215" ry="225" fill="#f39a1e" stroke="#3b2414" stroke-width="12"/>
<ellipse cx="715" cy="880" rx="104" ry="128" fill="#fff" stroke="#3b2414" stroke-width="10"/>
<polygon points="525,430 555,275 668,362" fill="#f39a1e" stroke="#3b2414" stroke-width="12"/><polygon points="775,362 862,270 925,430" fill="#6f4a3a" stroke="#3b2414" stroke-width="12"/>
<ellipse cx="720" cy="545" rx="248" ry="208" fill="#7a4a2a" stroke="#3b2414" stroke-width="12"/>
<path d="M720,340 Q960,350 966,545 Q950,745 720,752 Z" fill="#f39a1e"/><path d="M880,400 Q965,470 960,600 Q900,540 880,400 Z" fill="#7a4a2a"/>
<ellipse cx="720" cy="652" rx="128" ry="66" fill="#fff"/><path d="M720,600 V700" stroke="#3b2414" stroke-width="12"/><polygon points="690,585 750,585 720,622" fill="#2a1a10"/>
<circle cx="650" cy="512" r="46" fill="#fff" stroke="#3b2414" stroke-width="8"/><circle cx="795" cy="512" r="46" fill="#fff" stroke="#3b2414" stroke-width="8"/><circle cx="652" cy="514" r="16" fill="#111"/><circle cx="795" cy="514" r="16" fill="#111"/>
<ellipse cx="650" cy="1105" rx="48" ry="26" fill="#fff"/><ellipse cx="782" cy="1105" rx="48" ry="26" fill="#fff"/>
<circle cx="1100" cy="1080" r="146" fill="#f5862e" stroke="#5a2d0c" stroke-width="14"/></svg>
<svg class="b" style="left:2320px;top:1743px;" width="100" height="90" viewBox="0 0 1742 1568"><defs><linearGradient id="pg" x1="0" y1="0" x2="1" y2="0"><stop offset="0" stop-color="#7b4fc2"/><stop offset="0.55" stop-color="#b247ad"/><stop offset="1" stop-color="#db5b84"/></linearGradient></defs><polygon points="722,318 1130,555 1130,1020 722,1255 315,1020 315,555" fill="url(#pg)"/>
<g fill="#fff" transform="translate(722,790)"><rect x="-60" y="-300" width="120" height="600"/><rect x="-60" y="-300" width="120" height="600" transform="rotate(60)"/><rect x="-60" y="-300" width="120" height="600" transform="rotate(-60)"/></g></svg>
<svg class="b" style="left:2320px;top:1847px;" width="100" height="90" viewBox="0 0 1742 1568"><circle cx="735" cy="785" r="440" fill="#e0491a"/><circle cx="735" cy="782" r="220" fill="none" stroke="#fff" stroke-width="92"/>
<g stroke="#e0491a" stroke-width="22"><path d="M735,782 L1010,782"/><path d="M735,782 L598,545"/><path d="M735,782 L598,1020"/></g>
<circle cx="735" cy="782" r="165" fill="#e0491a"/>
<g fill="#fff" stroke="#e0491a" stroke-width="26"><circle cx="880" cy="520" r="75"/><circle cx="430" cy="782" r="75"/><circle cx="880" cy="1045" r="75"/></g></svg>
</div></body></html>
